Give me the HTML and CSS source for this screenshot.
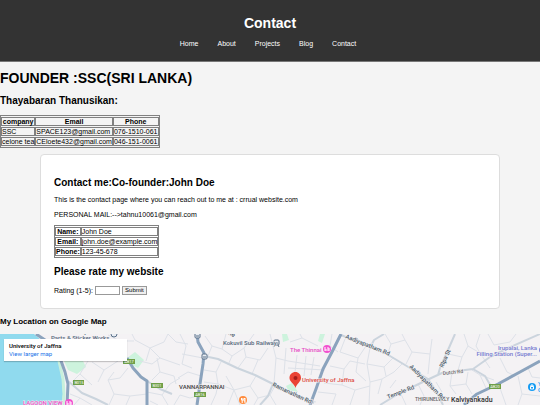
FILE: index.html
```html
<!DOCTYPE html>
<html lang="en">
<head>
  <meta charset="UTF-8">
  <meta name="viewport" content="width=device-width, initial-scale=1.0">
  <title>Contact</title>
  <link rel="stylesheet" href="styles.css">
</head>
<body>
  <header>
    <h1>Contact</h1>
    <nav>
      <ul>
        <li><a href="#">Home</a></li>
        <li><a href="#">About</a></li>
        <li><a href="#">Projects</a></li>
        <li><a href="#">Blog</a></li>
        <li><a href="#">Contact</a></li>
      </ul>
    </nav>
  </header>

  <h1 class="founder">FOUNDER :SSC(SRI LANKA)</h1>
  <h2 class="founder-name">Thayabaran Thanusikan:</h2>
  <table>
    <tr>
      <th>company</th>
      <th>Email</th>
      <th>Phone</th>
    </tr>
    <tr>
      <td>SSC</td>
      <td>SPACE123@gmail.com</td>
      <td>076-1510-061</td>
    </tr>
    <tr>
      <td>celone tea</td>
      <td>CEloete432@gmail.com</td>
      <td>046-151-0061</td>
    </tr>
  </table>

  <section class="contact-box">
    <h2>Contact me:Co-founder:John Doe</h2>
    <p>This is the contact page where you can reach out to me at : crrual website.com</p>
    <p>PERSONAL MAIL:--&gt;tahnu10061@gmail.com</p>
    <table>
      <tr>
        <th>Name:</th>
        <td>John Doe</td>
      </tr>
      <tr>
        <th>Email:</th>
        <td>john.doe@example.com</td>
      </tr>
      <tr>
        <th>Phone:</th>
        <td>123-45-678</td>
      </tr>
    </table>

    <h2 class="rate-title">Please rate my website</h2>
    <form>
      <label for="rating">Rating (1-5):</label>
      <input type="number" id="rating" name="rating" min="1" max="5">
      <button type="submit">Submit</button>
    </form>
  </section>

  <h3>My Location on Google Map</h3>
  <div class="map">
    <svg class="map-canvas" viewBox="0 0 540 71" preserveAspectRatio="xMinYMin slice">
      <!-- Water and parks -->
      <path class="water" d="M0 0H34L48 12L59 27L62 45L63 60L62 71H0Z"/>
      <path class="shore" d="M59 27L63 45L64 60L63 71"/>
      <path class="park" d="M64 27H83L86 33L77 40L68 36Z"/>
      <path class="park" d="M127 24L135 18L144 26L138 34L130 30Z"/>
      <path class="park" d="M282 0H287L289 6L283 8Z"/>
      <path class="park" d="M320 0H325L322 9L318 7Z"/>
      <path class="park" d="M286 52L292 49L298 58L288 56Z"/>

      <!-- Small streets -->
      <path class="street" d="M72 48L80 40L88 27M80 40L92 51M92 28L104 36L98 48M104 36L118 27M109 71L114 60L108 46L114 38M128 34L120 44L108 46M114 60L130 62L147 60M126 71L130 62M135 6L150 14L146 27M135 6L132 0M150 14L164 8L168 0M150 14L160 24L180 31M152 46L160 38L157 24M160 38L174 42L176 50M147 58L162 61L168 71M162 61L170 50L180 44"/>
      <path class="street" d="M108 1L120 7L118 22M120 7L134 7M140 27L152 30L160 24M168 0L176 8L188 10M180 0L186 12L182 30L192 34M182 20L203 24M178 44L188 38L201 42M150 67L158 71M180 61L190 64L197 62M70 60L80 64L92 71M74 71L80 64M174 71L180 61"/>
      <path class="street" d="M205 2L212 12L208 22M212 12L222 15L226 0M222 15L232 22L228 31M232 22L244 14L254 0M238 34L246 23L244 14M246 23L260 26L268 14M252 40L258 26M204 36L216 38L221 28M216 38L218 50L234 56L240 71M218 50L204 48M226 42L234 56L250 52L256 42M250 52L258 64L254 71M258 64L270 61L276 50M270 61L276 71M211 71L216 60L218 50M228 71L234 56"/>
      <path class="street" d="M270 0L276 24L274 49M276 24L288 27L320 32M286 14L284 40M297 21L295 38M306 22L304 42M314 23L311 41M288 34L325 36M290 8L302 4L300 0M302 4L318 12M338 18L330 12L332 0M330 32L344 35L350 27L365 30M344 35L342 51L324 49M342 51L355 56L370 52M355 56L350 71M332 71L336 60L318 58M308 66L316 68"/>
      <path class="street" d="M345 5L340 18L358 24L366 12M358 24L356 38L366 47M370 14L367 30L370 48L369 71M370 48L382 45L394 38L402 30M382 45L378 60M367 30L384 33L394 23M384 33L386 42M385 0L391 10L388 19M391 10L405 6L402 0M405 6L412 18L406 30M412 18L430 20L432 5M430 20L428 40M400 58L406 71M418 50L424 62L420 71M390 54L396 46"/>
      <path class="street" d="M448 20L462 23L468 12L464 0M462 23L458 36M468 12L480 19L490 34M480 0L476 12L480 19M488 0L494 11L510 8L516 0M500 24L507 38L515 42M472 36L480 41L486 54M480 41L494 46M452 38L450 52L456 60M450 52L466 50L468 38M466 50L472 60M500 54L506 71M518 42L522 60L518 71M522 60L540 62M528 34L532 43L540 44M442 58L436 48"/>

      <!-- Secondary roads -->
      <path class="lane" d="M68 47L82 59L96 65L108 71M147 47L160 55L172 60M204 22L218 25L237 34L255 41L273 50L292 59L314 69M260 71L268 62L273 50M341 1L360 9L385 19L410 34L428 45L436 57L443 71M455 0L448 16L440 34L438 41M380 71L398 60L427 46L442 39L473 35L490 23L508 14L540 0M370 14L374 6L384 0M473 35L485 42L492 54"/>

      <!-- Main roads -->
      <path class="road" d="M36 0L48 8L60 24L65 38L68 50L67 71"/>
      <path class="road" d="M127 24L133 34L141 43L147 47L147 71"/>
      <path class="road" d="M197 0L198 8L204 19L203 30L200 50L197 71"/>
      <path class="road" d="M341 0L333 16L323 35L316 55L310 71"/>
      <path class="road" d="M464 71L477 60L498 50L520 38L540 27"/>

      <!-- Route numbers -->
      <g class="route">
        <rect x="123" y="25" width="12" height="5"/><text x="129" y="29">AB17</text>
        <rect x="73" y="46" width="11" height="5"/><text x="79" y="50">B015</text>
        <rect x="151" y="49" width="12" height="5"/><text x="157" y="53">B301</text>
        <rect x="194" y="58" width="12" height="5"/><text x="200" y="62">AB16</text>
        <rect x="489" y="50" width="12" height="5"/><text x="495" y="54">AB20</text>
      </g>

      <!-- Railway stations -->
      <g class="station">
        <rect x="195" y="-1" width="5" height="5" rx="1"/><path d="M196 2H199"/>
        <rect x="202" y="20" width="5" height="5" rx="1"/><path d="M203 23H206"/>
        <rect x="274" y="6" width="5" height="5" rx="1"/><path d="M275 9H278M275 11L274 13M278 11L279 13"/>
        <circle cx="114" cy="0" r="3"/>
      </g>

      <!-- Place markers -->
      <circle class="hotel" cx="69" cy="69" r="4"/>
      <path class="glyph" d="M67 67V71M67 70H71V71M69 68H71V70"/>
      <circle class="hotel" cx="327" cy="15" r="4"/>
      <path class="glyph" d="M325 13V17M325 16H329V17M327 14H329V16"/>
      <circle class="food" cx="243" cy="66" r="4"/>
      <path class="glyph" d="M241.5 64V66H243V64M242.2 66V69M245 69V64L244 65V67H245"/>
      <circle class="shop" cx="532" cy="53" r="4"/>
      <path class="glyph" d="M530.5 52.5H533.5V55H530.5ZM531 52.5V51H533V52.5"/>
      <circle class="shop-purple" cx="542" cy="16" r="3"/>
      <path class="pin" d="M295.500 38C292 38 289.500 40.500 289.500 44C289.500 48 294 49 295.500 54C297 49 301 48 301 44C301 40.500 298.500 38 295.500 38Z"/>
      <circle class="pin-dot" cx="295.5" cy="44" r="2"/>

      <!-- Place names -->
      <g class="place">
        <text x="51" y="0">Sams Battery Works</text>
        <text x="51" y="6">Parts &amp; Sticker Works</text>
        <text x="223" y="11">Kokuvil Sub Railway</text>
        <text x="179" y="55" class="district">VANNARPANNAI</text>
        <text x="415" y="67" class="small">THIRUNELVELY</text>
        <text x="451" y="68" class="town">Kalviyankadu</text>
        <text x="290" y="18" class="pink">The Thinnai</text>
        <text x="23" y="71" class="pink">LAGOON VIEW</text>
        <text x="302" y="48" class="red">University of Jaffna</text>
        <text x="537" y="16" class="purple">Irupalai, Lanka</text>
        <text x="537" y="22" class="purple">Filling Station (Super...</text>
        <text x="538" y="52" class="blue">Y</text>
        <text x="538" y="58" class="blue">C</text>
      </g>
      <g class="road-name">
        <text transform="translate(272 52) rotate(25)">Ramanathan Rd</text>
        <text transform="translate(345 4) rotate(22)">Aadiyapatham Rd</text>
        <text transform="translate(409 33) rotate(45)">Aadiyapatham Rd</text>
        <text transform="translate(388 65) rotate(-21)">Temple Rd</text>
        <text transform="translate(443 34) rotate(-66)">Rlpa St</text>
        <text transform="translate(443 41) rotate(-6)" class="small">Dutch Rd</text>
        <text transform="translate(228 0) rotate(30)">ne</text>
      </g>
    </svg>
    <div class="map-card">
      <strong>University of Jaffna</strong>
      <a href="#">View larger map</a>
    </div>
  </div>
</body>
</html>
```
FILE: styles.css
```css
* {
  box-sizing: border-box;
}

body {
  display: flex;
  flex-direction: column;
  min-height: 100vh;
  margin: 0;
  background-color: #f4f4f4;
  color: #000;
  font-family: Arial, "Liberation Sans", sans-serif;
  font-size: 7px;
  line-height: 8px;
}

h1, h2, h3, p, ul {
  margin: 0;
}

h1 {
  font-size: 14px;
  line-height: 16px;
}

h2 {
  font-size: 10px;
  line-height: 12px;
}

h3 {
  margin: 8px 0;
  font-size: 8px;
  line-height: 9px;
}

/* Header */
header {
  padding: 15px 0 13px;
  background-color: #333;
  border-bottom: 1px solid #777;
  color: #fff;
  text-align: center;
}

nav ul {
  display: flex;
  justify-content: center;
  gap: 19px;
  margin-top: 9px;
  padding: 0 4px 0 0;
  list-style: none;
}

nav a {
  color: #fff;
  text-decoration: none;
}

.founder {
  margin-top: 8px;
}

.founder-name {
  margin: 9px 0 8px;
}

/* Tables */
table {
  align-self: flex-start;
  border: 1px solid #808080;
  border-spacing: 0 1px;
  line-height: 7px;
}

th, td {
  padding: 0;
  border: 1px solid #808080;
}

td {
  text-align: left;
}

/* Contact box */
.contact-box {
  margin: 6px 40px 0;
  padding: 22px 13px 13px;
  background-color: #fff;
  border: 1px solid #ddd;
  border-radius: 4px;
}

.contact-box p {
  margin: 7px 0 6px;
}

.contact-box .rate-title {
  margin: 8px 0;
}

form {
  display: flex;
  align-items: center;
  gap: 2px;
}

input {
  width: 25px;
  height: 9px;
  padding: 0;
  border: 1px solid #999;
  font-size: 6px;
}

button {
  width: 25px;
  height: 9px;
  padding: 0;
  background-color: #efefef;
  border: 1px solid #999;
  color: #000;
  font-family: inherit;
  font-size: 6px;
  line-height: 7px;
}

/* Map */
.map {
  position: relative;
  flex: 1;
  min-height: 70px;
  overflow: hidden;
  background-color: #f4f2f4;
  font-family: Roboto, sans-serif;
}

.map-canvas {
  display: block;
  width: 100%;
}

.map-card {
  position: absolute;
  top: 5px;
  left: 4px;
  display: flex;
  flex-direction: column;
  width: 123px;
  padding: 3px 5px;
  background-color: #fff;
  box-shadow: 0 1px 1px rgba(0, 0, 0, 0.2);
  font-size: 6px;
}

.map-card strong {
  font-weight: 500;
}

.map-card a {
  color: #1a73e8;
  text-decoration: none;
}

.water { fill: #90daee; }
.park { fill: #cdf3dd; }
.pin { fill: #ea4335; }
.pin-dot { fill: #a51d1a; }
.hotel { fill: #f250cf; }
.food { fill: #ff8b3d; }
.shop { fill: #159bf3; }
.shop-purple { fill: #7a80d4; }

.shore, .street, .lane, .road, .glyph {
  fill: none;
  stroke-linejoin: round;
}

.shore { stroke: #c8f0dc; stroke-width: 3px; }
.street { stroke: #dde1e8; stroke-width: 1px; }
.lane { stroke: #cbd4dd; stroke-width: 2px; }
.road { stroke: #8ba3bd; stroke-width: 3px; }
.glyph { stroke: #fff; stroke-width: 1px; }

.route rect { fill: #6f9f48; }

.route text {
  fill: #fff;
  font-size: 4px;
  text-anchor: middle;
}

.station rect, .station path, .station circle {
  fill: #e8edf3;
  stroke: #5b7189;
  stroke-width: 1px;
}

.place, .road-name {
  fill: #56697c;
  stroke: #f4f2f4;
  stroke-width: 1px;
  paint-order: stroke;
  font-size: 6px;
  font-weight: 500;
}

.road-name { fill: #4a5967; }
.place .district { fill: #444; }
.place .town { fill: #333; font-size: 7px; }
.place .pink { fill: #e64cc4; }
.place .red { fill: #dc4a43; }
.place .purple { fill: #757bd0; text-anchor: end; }
.place .blue { fill: #159bf3; }
.place .small, .road-name .small { fill: #666; font-size: 5px; }
```
